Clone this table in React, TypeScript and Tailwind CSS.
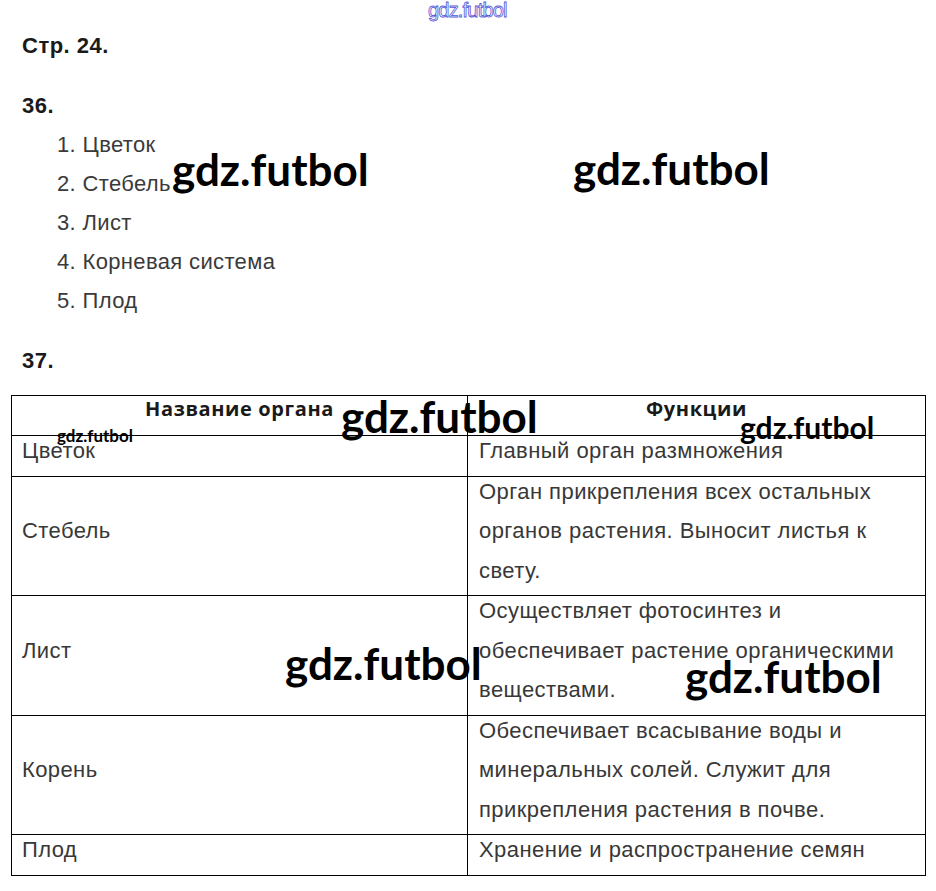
import React from "react";

const rows: { name: string; fn: string[] }[] = [
  { name: "Цветок", fn: ["Главный орган размножения"] },
  {
    name: "Стебель",
    fn: ["Орган прикрепления всех остальных", "органов растения. Выносит листья к", "свету."],
  },
  {
    name: "Лист",
    fn: ["Осуществляет фотосинтез и", "обеспечивает растение органическими", "веществами."],
  },
  {
    name: "Корень",
    fn: ["Обеспечивает всасывание воды и", "минеральных солей. Служит для", "прикрепления растения в почве."],
  },
  { name: "Плод", fn: ["Хранение и распространение семян"] },
];

const list = ["Цветок", "Стебель", "Лист", "Корневая система", "Плод"];

export default function App() {
  return (
    <div
      className="relative w-[936px] h-[891px] bg-white overflow-hidden"
      style={{ fontFamily: '"Liberation Sans", Arial, sans-serif' }}
    >
      <div className="pt-[34px] pl-[22px]">
        <div className="text-[22px] leading-[24px] tracking-[0.5px] font-bold text-[#1a1a1a]">Стр. 24.</div>
        <div className="mt-[36px] text-[22px] leading-[24px] tracking-[0.5px] font-bold text-[#1a1a1a]">36.</div>
        <ol className="mt-[7px] pl-[35px] text-[22px] leading-[39px] tracking-[0.35px] text-[#3a3a3a]">
          {list.map((t, i) => (
            <li key={t}>
              {i + 1}. {t}
            </li>
          ))}
        </ol>
        <div className="mt-[29px] text-[22px] leading-[24px] tracking-[0.5px] font-bold text-[#1a1a1a]">37.</div>
      </div>

      <table className="ml-[11px] mt-[22px] w-[914px] border-collapse table-fixed">
        <colgroup>
          <col className="w-[456px]" />
          <col className="w-[458px]" />
        </colgroup>
        <thead>
          <tr className="h-[40px]">
            <th
              className="border border-black align-top pt-[1px] text-[20px] leading-[24px] tracking-[0.6px] font-bold text-[#1a1a1a]"
              style={{ fontFamily: '"Open Sans", "Lato", sans-serif' }}
            >
              Название органа
            </th>
            <th
              className="border border-black align-top pt-[1px] text-[20px] leading-[24px] tracking-[0.6px] font-bold text-[#1a1a1a]"
              style={{ fontFamily: '"Open Sans", "Lato", sans-serif' }}
            >
              Функции
            </th>
          </tr>
        </thead>
        <tbody>
          {rows.map((r) => (
            <tr key={r.name}>
              <td className="border border-black align-middle pl-[10px] text-[22px] leading-[39.5px] tracking-[0.4px] text-[#383838]">
                <div className="-mt-[5px] mb-[5px]">{r.name}</div>
              </td>
              <td className="border border-black align-middle pl-[11px] text-[22px] leading-[39.5px] tracking-[0.45px] text-[#383838]">
                <div className="-mt-[5px] mb-[5px]">
                  {r.fn.map((l) => (
                    <div key={l} className="whitespace-nowrap">
                      {l}
                    </div>
                  ))}
                </div>
              </td>
            </tr>
          ))}
        </tbody>
      </table>

      <div className="absolute left-[428px] top-[0px] text-[20px] leading-none tracking-[-0.8px] text-transparent [-webkit-text-stroke:0.8px_#5555d5]">
        gdz.futbol
      </div>

      <div style={{ fontFamily: '"Lato", sans-serif' }}>
        <div className="absolute left-[172px] top-[147px] text-[44px] leading-none font-bold text-black">gdz.futbol</div>
        <div className="absolute left-[573px] top-[146px] text-[44px] leading-none font-bold text-black">gdz.futbol</div>
        <div className="absolute left-[341px] top-[394px] text-[44px] leading-none font-bold text-black">gdz.futbol</div>
        <div className="absolute left-[285px] top-[641px] text-[44px] leading-none font-bold text-black">gdz.futbol</div>
        <div className="absolute left-[685px] top-[654px] text-[44px] leading-none font-bold text-black">gdz.futbol</div>
        <div className="absolute left-[740px] top-[412px] text-[30px] leading-none font-bold text-black">gdz.futbol</div>
        <div className="absolute left-[57px] top-[427px] text-[17px] leading-none font-bold text-black">gdz.futbol</div>
      </div>
    </div>
  );
}
